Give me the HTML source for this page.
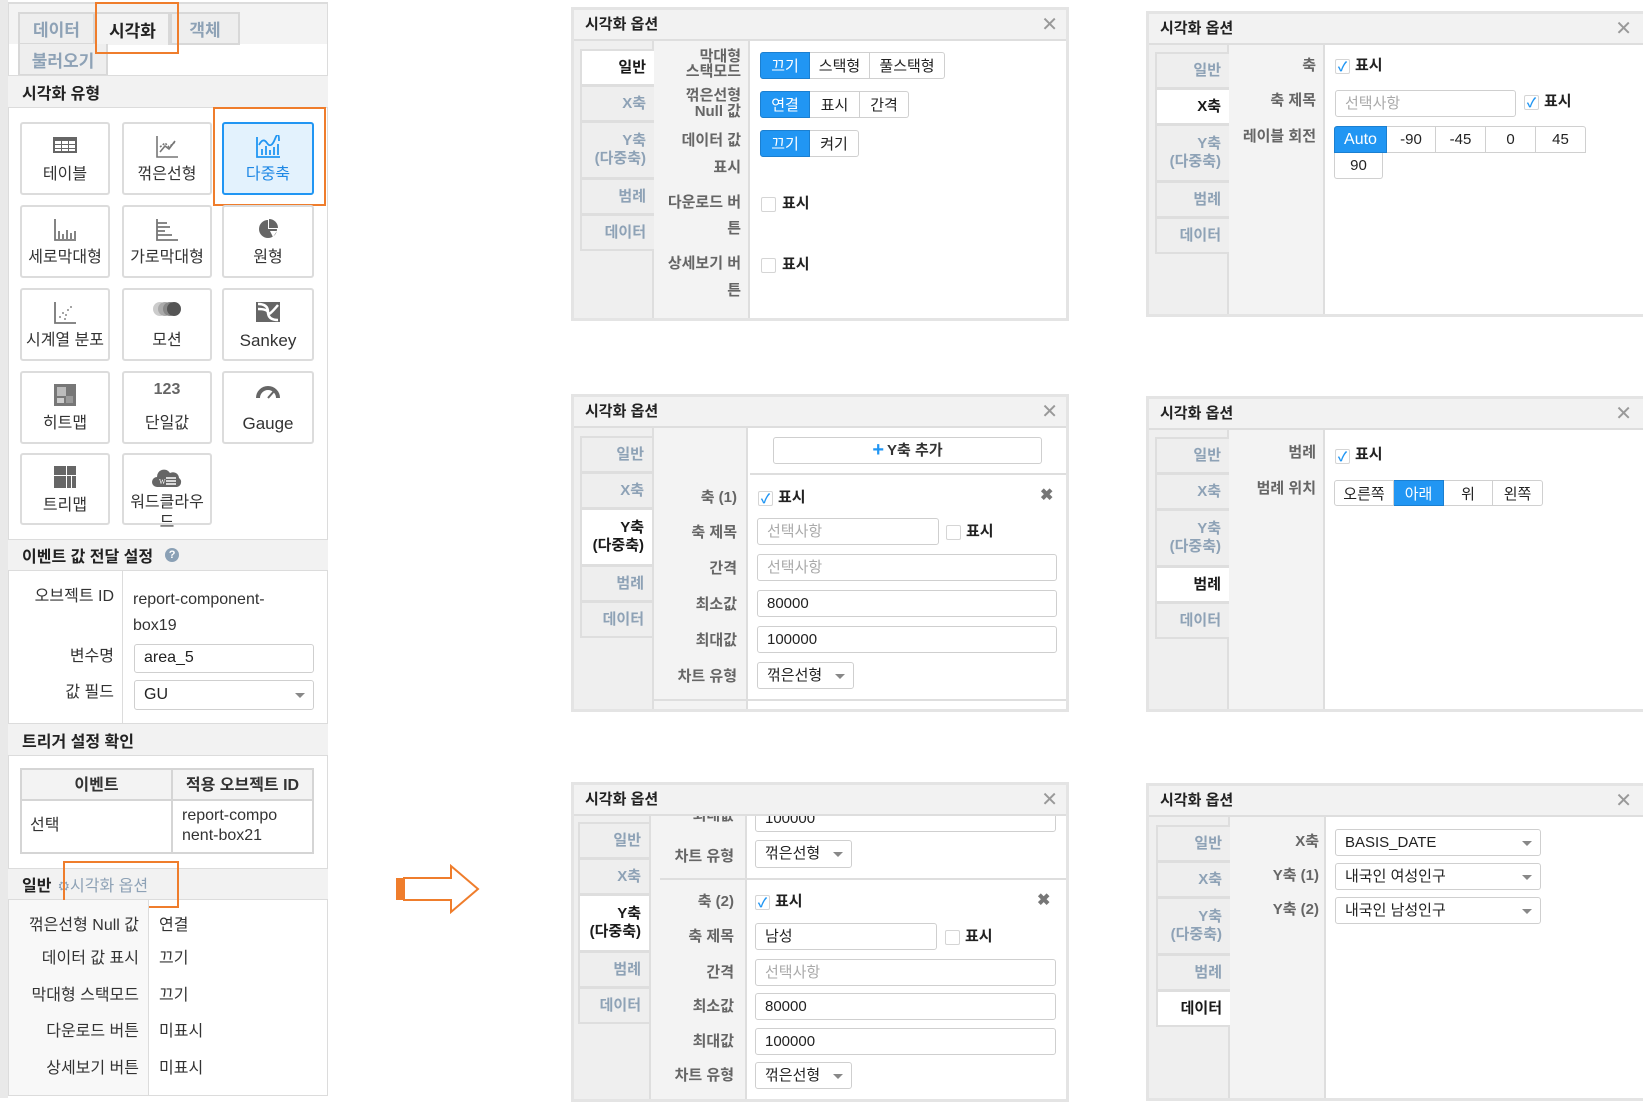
<!DOCTYPE html>
<html><head><meta charset="utf-8">
<style>
*{box-sizing:border-box;margin:0;padding:0}
body{width:1643px;height:1098px;background:#fff;position:relative;overflow:hidden;font-family:"Liberation Sans","Noto Sans CJK KR",sans-serif;color:#222}
.a{position:absolute}
.c{display:flex;align-items:center;justify-content:center}
.hd{background:#f2f2f2;border-top:1px solid #dcdcdc;border-bottom:1px solid #dcdcdc;font-weight:bold;font-size:16px;padding-left:14px;display:flex;align-items:center}
.card{position:absolute;border:2px solid #dcdcdc;border-radius:3px;background:#fff;font-size:16px;color:#333}
.card .ic{position:absolute;left:0;right:0;top:11px;height:26px;display:flex;justify-content:center}
.card .lb{position:absolute;left:0;right:0;top:41px;text-align:center;line-height:20px}
.org{position:absolute;border:2px solid #ef7d2c}
.dlg{position:absolute;border:3px solid #e4e4e4;background:#fff;overflow:hidden}
.dlg .tt{position:absolute;left:0;right:0;top:0;height:31px;background:#f2f2f2;border-bottom:2px solid #dedede;font-weight:bold;font-size:15px;padding-left:11px;line-height:29px}
.dlg .x{position:absolute;right:8px;top:3px;font-size:20px;color:#999;line-height:24px}
.dlg .tc{position:absolute;left:0;top:31px;width:80px;bottom:0;background:#efefef;border-right:2px solid #dedede}
.dlg .lc{position:absolute;left:80px;top:31px;width:96px;bottom:0;background:#f3f3f3;border-right:2px solid #dedede}
.tab{position:absolute;left:6px;width:74px;background:#eeeeee;border:2px solid #dedede;border-right:none;color:#8ea2b6;font-weight:bold;font-size:15px;text-align:right;padding-right:8px;display:flex;flex-direction:column;justify-content:center;line-height:18px}
.tab.on{background:#fff;color:#1a1a1a}
.lbl{position:absolute;right:0;width:170px;text-align:right;color:#666;font-weight:bold;font-size:15px;line-height:18px}
.seg{position:absolute;display:flex;height:27px}
.seg span{border:1px solid #d0d0d0;border-left:none;background:#fff;font-size:15px;display:flex;align-items:center;justify-content:center;color:#222}
.seg span:first-child{border-left:1px solid #d0d0d0;border-radius:3px 0 0 3px}
.seg span:last-child{border-radius:0 3px 3px 0}
.seg span.b{background:#2196f3;border-color:#1b7fd0;color:#fff}
.cb{position:absolute;width:15px;height:15px;border:1px solid #d5d5d5;border-radius:2px;background:#fff;color:#2196f3;font-size:13px;line-height:13px;text-align:center;font-weight:bold}
.t15{position:absolute;font-size:15px;font-weight:bold;color:#222;line-height:18px}
.inp{position:absolute;height:27px;border:1px solid #cfcfcf;border-radius:3px;background:#fff;font-size:15px;padding-left:9px;line-height:25px;color:#222}
.ph{color:#aaa}
.car{position:absolute;right:8px;top:11px;width:0;height:0;border-left:5px solid transparent;border-right:5px solid transparent;border-top:5px solid #888}
.row{position:absolute;font-size:16px;color:#333;line-height:20px}
</style></head><body>

<!-- LEFT PANEL -->
<div class="a" style="left:0;top:0;width:8px;height:1098px;background:#e9e9e9"></div>
<div class="a" style="left:8px;top:2px;width:320px;height:1094px;border:1px solid #dcdcdc;border-top:2px solid #dcdcdc;background:#fff"></div>
<div class="a" style="left:9px;top:4px;width:318px;height:40px;background:#f3f3f3"></div>
<div class="a c" style="left:18px;top:12px;width:77px;height:33px;background:#eeeeee;border:2px solid #d8d8d8;color:#8ea2b6;font-weight:bold;font-size:17px">데이터</div>
<div class="a c" style="left:95px;top:12px;width:75px;height:33px;background:#f3f3f3;border:2px solid #d8d8d8;border-bottom:none;font-weight:bold;font-size:17px">시각화</div>
<div class="a c" style="left:170px;top:12px;width:70px;height:33px;background:#eeeeee;border:2px solid #d8d8d8;color:#8ea2b6;font-weight:bold;font-size:17px">객체</div>
<div class="a c" style="left:18px;top:44px;width:90px;height:32px;background:#eeeeee;border:2px solid #d8d8d8;border-top:none;color:#8ea2b6;font-weight:bold;font-size:17px">불러오기</div>
<div class="org" style="left:95px;top:2px;width:84px;height:52px"></div>

<div class="a hd" style="left:8px;top:75px;width:320px;height:33px">시각화 유형</div>

<div class="card" style="left:20px;top:122px;width:90px;height:73px"><div class="ic"><svg width="26" height="20" viewBox="0 0 26 20"><rect x="1" y="2" width="24" height="16" fill="#666"/><g fill="#fff"><rect x="3" y="6" width="6" height="3"/><rect x="10" y="6" width="6" height="3"/><rect x="17" y="6" width="6" height="3"/><rect x="3" y="10" width="6" height="3"/><rect x="10" y="10" width="6" height="3"/><rect x="17" y="10" width="6" height="3"/><rect x="3" y="14" width="6" height="2"/><rect x="10" y="14" width="6" height="2"/><rect x="17" y="14" width="6" height="2"/></g></svg></div><div class="lb">테이블</div></div>
<div class="card" style="left:122px;top:122px;width:90px;height:73px"><div class="ic"><svg width="24" height="24" viewBox="0 0 24 24" fill="none" stroke="#777" stroke-width="1.6"><path d="M2 1v21h21"/><path d="M5 17l5-6 4 3 6-8" /><path d="M5 12l5-4 4 4 6-5" stroke-dasharray="2 1.5"/></svg></div><div class="lb">꺾은선형</div></div>
<div class="card" style="left:222px;top:122px;width:92px;height:73px;background:#e3f2fd;border-color:#2196f3;color:#1e88e5"><div class="ic"><svg width="26" height="24" viewBox="0 0 26 24" fill="none" stroke="#2196f3" stroke-width="1.8"><path d="M2 2v20h23"/><path d="M7 20v-6M11 20v-9M15 20v-5M19 20v-8M23 20v-11"/><path d="M4 10q4-8 8-2t8-4 4 2"/></svg></div><div class="lb">다중축</div></div>
<div class="org" style="left:213px;top:107px;width:113px;height:99px"></div>

<div class="card" style="left:20px;top:205px;width:90px;height:73px"><div class="ic"><svg width="24" height="24" viewBox="0 0 24 24" fill="none" stroke="#777" stroke-width="1.8"><path d="M2 1v21h21"/><path d="M6 21v-8M10 21v-5M14 21v-9M18 21v-6M22 21v-8"/></svg></div><div class="lb">세로막대형</div></div>
<div class="card" style="left:122px;top:205px;width:90px;height:73px"><div class="ic"><svg width="24" height="24" viewBox="0 0 24 24" fill="none" stroke="#777" stroke-width="1.8"><path d="M2 1v21h21"/><path d="M2 5h10M2 9h13M2 13h8M2 17h15"/></svg></div><div class="lb">가로막대형</div></div>
<div class="card" style="left:222px;top:205px;width:92px;height:73px"><div class="ic"><svg width="22" height="22" viewBox="0 0 22 22"><path d="M11 2a9 9 0 1 0 9 9h-9z" fill="#666"/><path d="M12 1a9 9 0 0 1 9 9h-9z" fill="#666"/><path d="M13 13h7l-4 6z" fill="#fff"/></svg></div><div class="lb">원형</div></div>

<div class="card" style="left:20px;top:288px;width:90px;height:73px"><div class="ic"><svg width="24" height="24" viewBox="0 0 24 24" fill="#888"><path d="M2 1v21h21" fill="none" stroke="#777" stroke-width="1.8"/><circle cx="7" cy="16" r="1"/><circle cx="10" cy="12" r="1"/><circle cx="13" cy="14" r="1"/><circle cx="15" cy="9" r="1"/><circle cx="18" cy="6" r="1"/><circle cx="12" cy="18" r="1"/></svg></div><div class="lb">시계열 분포</div></div>
<div class="card" style="left:122px;top:288px;width:90px;height:73px"><div class="ic"><svg width="30" height="16" viewBox="0 0 30 16"><circle cx="8" cy="8" r="7" fill="#ccc"/><circle cx="13" cy="8" r="7" fill="#aaa"/><circle cx="18" cy="8" r="7" fill="#888"/><circle cx="22" cy="8" r="7" fill="#555"/></svg></div><div class="lb">모션</div></div>
<div class="card" style="left:222px;top:288px;width:92px;height:73px"><div class="ic"><svg width="26" height="22" viewBox="0 0 26 22"><rect x="1" y="1" width="24" height="20" fill="#666"/><path d="M3 3q10 0 10 8t10 8M3 8q10 0 10 4t10-8" stroke="#fff" stroke-width="2.5" fill="none"/></svg></div><div class="lb" style="font-size:17px">Sankey</div></div>

<div class="card" style="left:20px;top:371px;width:90px;height:73px"><div class="ic"><svg width="22" height="22" viewBox="0 0 22 22"><rect x="0" y="0" width="22" height="22" fill="#777"/><rect x="3" y="3" width="9" height="9" fill="#bbb"/><rect x="12" y="12" width="7" height="7" fill="#999"/><rect x="3" y="14" width="7" height="5" fill="#ccc"/></svg></div><div class="lb">히트맵</div></div>
<div class="card" style="left:122px;top:371px;width:90px;height:73px"><div class="ic" style="font-weight:bold;color:#666;font-size:16px;top:8px">123</div><div class="lb">단일값</div></div>
<div class="card" style="left:222px;top:371px;width:92px;height:73px"><div class="ic"><svg width="24" height="16" viewBox="0 0 24 16"><path d="M2 14a10 10 0 0 1 20 0" stroke="#666" stroke-width="4" fill="none"/><path d="M12 14l7-8" stroke="#666" stroke-width="2"/></svg></div><div class="lb" style="font-size:17px">Gauge</div></div>

<div class="card" style="left:20px;top:453px;width:90px;height:72px"><div class="ic"><svg width="22" height="22" viewBox="0 0 22 22" fill="#666"><rect x="0" y="0" width="12" height="9"/><rect x="13" y="0" width="9" height="9"/><rect x="0" y="10" width="12" height="12"/><rect x="13" y="10" width="4" height="12"/><rect x="18" y="10" width="4" height="12"/></svg></div><div class="lb">트리맵</div></div>
<div class="card" style="left:122px;top:453px;width:90px;height:72px;overflow:visible"><div class="ic"><svg width="32" height="22" viewBox="0 0 32 22"><path d="M6 21a5 5 0 0 1 0-10a7 7 0 0 1 13-4a6 6 0 0 1 9 5a5 5 0 0 1-2 9z" fill="#666"/><text x="8" y="18" font-size="7" fill="#fff" font-family="Liberation Serif">W</text><path d="M15 12h10M15 15h10M15 18h10" stroke="#fff" stroke-width="1.5"/></svg></div><div class="lb" style="top:38px">워드클라우<br>드</div></div>

<div class="a hd" style="left:8px;top:539px;width:320px;height:32px">이벤트 값 전달 설정 <span style="display:inline-block;margin-left:12px;width:14px;height:14px;border-radius:50%;background:#8aa0b5;color:#fff;font-size:11px;text-align:center;line-height:14px">?</span></div>
<div class="a" style="left:122px;top:571px;width:1px;height:152px;background:#dcdcdc"></div>
<div class="row" style="left:8px;top:587px;width:106px;text-align:right">오브젝트 ID</div>
<div class="row" style="left:133px;top:587px;line-height:26px">report-component-<br>box19</div>
<div class="row" style="left:8px;top:647px;width:106px;text-align:right">변수명</div>
<div class="inp" style="left:134px;top:644px;width:180px;height:29px;font-size:16px">area_5</div>
<div class="row" style="left:8px;top:683px;width:106px;text-align:right">값 필드</div>
<div class="inp" style="left:134px;top:680px;width:180px;height:30px;font-size:16px;line-height:28px">GU<div class="car" style="top:12px"></div></div>

<div class="a hd" style="left:8px;top:723px;width:320px;height:33px">트리거 설정 확인</div>
<div class="a" style="left:20px;top:768px;width:294px;height:86px;border:2px solid #d5d5d5"></div>
<div class="a" style="left:22px;top:770px;width:290px;height:31px;background:#f3f3f3;border-bottom:2px solid #d5d5d5"></div>
<div class="a" style="left:171px;top:770px;width:2px;height:82px;background:#d5d5d5"></div>
<div class="row c" style="left:22px;top:770px;width:149px;height:31px;font-weight:bold">이벤트</div>
<div class="row c" style="left:173px;top:770px;width:139px;height:31px;font-weight:bold">적용 오브젝트 ID</div>
<div class="row" style="left:30px;top:816px">선택</div>
<div class="row" style="left:182px;top:806px;line-height:20px">report-compo<br>nent-box21</div>

<div class="a hd" style="left:8px;top:868px;width:320px;height:32px">일반 <span style="color:#8ea2b6;font-weight:normal;margin-left:6px"><span style="font-size:14px">⚙</span>시각화 옵션</span></div>
<div class="org" style="left:63px;top:861px;width:116px;height:47px"></div>
<div class="a" style="left:9px;top:900px;width:139px;height:195px;background:#f8f8f8"></div>
<div class="a" style="left:148px;top:900px;width:1px;height:195px;background:#dcdcdc"></div>
<div class="row" style="left:8px;top:916px;width:131px;text-align:right">꺾은선형 Null 값</div><div class="row" style="left:159px;top:916px">연결</div>
<div class="row" style="left:8px;top:949px;width:131px;text-align:right">데이터 값 표시</div><div class="row" style="left:159px;top:949px">끄기</div>
<div class="row" style="left:8px;top:986px;width:131px;text-align:right">막대형 스택모드</div><div class="row" style="left:159px;top:986px">끄기</div>
<div class="row" style="left:8px;top:1022px;width:131px;text-align:right">다운로드 버튼</div><div class="row" style="left:159px;top:1022px">미표시</div>
<div class="row" style="left:8px;top:1059px;width:131px;text-align:right">상세보기 버튼</div><div class="row" style="left:159px;top:1059px">미표시</div>

<!-- ARROW -->
<svg class="a" style="left:394px;top:864px" width="88" height="50" viewBox="0 0 88 50"><rect x="2" y="14" width="7" height="22" fill="#ef7d2c"/><path d="M10 14h47v-12l27 23-27 23v-12h-47z" fill="#fff" stroke="#ef7d2c" stroke-width="2"/></svg>

<!-- DIALOG 1 -->
<div class="dlg" style="left:571px;top:7px;width:498px;height:314px">
<div class="tt">시각화 옵션</div><div class="x">✕</div>
<div class="tc"></div><div class="lc"></div>
<div class="tab on" style="top:39px;height:37px">일반</div>
<div class="tab" style="top:75px;height:37px">X축</div>
<div class="tab" style="top:111px;height:58px">Y축<br>(다중축)</div>
<div class="tab" style="top:168px;height:37px">범례</div>
<div class="tab" style="top:204px;height:37px">데이터</div>
<div class="lbl" style="left:0;width:167px;top:39px;line-height:15px">막대형<br>스택모드</div>
<div class="lbl" style="left:0;width:167px;top:78px;line-height:16px">꺾은선형<br>Null 값</div>
<div class="lbl" style="left:0;width:167px;top:117px;line-height:27px">데이터 값<br>표시</div>
<div class="lbl" style="left:0;width:167px;top:180px;line-height:26px">다운로드 버<br>튼</div>
<div class="lbl" style="left:0;width:167px;top:240px;line-height:27px">상세보기 버<br>튼</div>
<div class="seg" style="left:186px;top:42px"><span class="b" style="width:50px">끄기</span><span style="width:60px">스택형</span><span style="width:75px">풀스택형</span></div>
<div class="seg" style="left:186px;top:81px"><span class="b" style="width:50px">연결</span><span style="width:50px">표시</span><span style="width:49px">간격</span></div>
<div class="seg" style="left:186px;top:120px"><span class="b" style="width:50px">끄기</span><span style="width:49px">켜기</span></div>
<div class="cb" style="left:187px;top:187px"></div><div class="t15" style="left:208px;top:185px">표시</div>
<div class="cb" style="left:187px;top:248px"></div><div class="t15" style="left:208px;top:246px">표시</div>
</div>

<!-- DIALOG 2 -->
<div class="dlg" style="left:1146px;top:11px;width:500px;height:306px">
<div class="tt">시각화 옵션</div><div class="x" style="right:11px">✕</div>
<div class="tc"></div><div class="lc"></div>
<div class="tab" style="top:38px;height:37px">일반</div>
<div class="tab on" style="top:74px;height:37px">X축</div>
<div class="tab" style="top:110px;height:58px">Y축<br>(다중축)</div>
<div class="tab" style="top:167px;height:37px">범례</div>
<div class="tab" style="top:203px;height:37px">데이터</div>
<div class="lbl" style="left:0;width:167px;top:43px">축</div>
<div class="lbl" style="left:0;width:167px;top:78px">축 제목</div>
<div class="lbl" style="left:0;width:167px;top:114px">레이블 회전</div>
<div class="cb" style="left:186px;top:45px">✓</div><div class="t15" style="left:206px;top:43px">표시</div>
<div class="inp ph" style="left:186px;top:76px;width:181px">선택사항</div>
<div class="cb" style="left:375px;top:81px">✓</div><div class="t15" style="left:395px;top:79px">표시</div>
<div class="seg" style="left:185px;top:112px"><span class="b" style="width:53px;border-radius:3px 0 0 0;font-size:16px">Auto</span><span style="width:49px">-90</span><span style="width:50px">-45</span><span style="width:50px">0</span><span style="width:50px;border-radius:0 3px 0 0">45</span></div>
<div class="seg" style="left:185px;top:139px;height:26px"><span style="width:49px;border-top:none;border-radius:0 0 3px 3px">90</span></div>
</div>

<!-- DIALOG 3 -->
<div class="dlg" style="left:571px;top:394px;width:498px;height:318px">
<div class="tt">시각화 옵션</div><div class="x">✕</div>
<div class="tc"></div><div class="lc" style="width:94px"></div>
<div class="tab" style="top:39px;height:37px;width:72px">일반</div>
<div class="tab" style="top:75px;height:37px;width:72px">X축</div>
<div class="tab on" style="top:111px;height:58px;width:72px">Y축<br>(다중축)</div>
<div class="tab" style="top:168px;height:37px;width:72px">범례</div>
<div class="tab" style="top:204px;height:37px;width:72px">데이터</div>
<div class="inp c" style="left:199px;top:40px;width:269px;height:27px;padding:0;font-weight:bold;color:#333"><span style="color:#2196f3;font-size:20px;margin-right:3px">+</span>Y축 추가</div>
<div class="a" style="left:176px;top:76px;width:320px;height:2px;background:#dedede"></div>
<div class="lbl" style="left:0;width:163px;top:92px">축 (1)</div>
<div class="lbl" style="left:0;width:163px;top:127px">축 제목</div>
<div class="lbl" style="left:0;width:163px;top:163px">간격</div>
<div class="lbl" style="left:0;width:163px;top:199px">최소값</div>
<div class="lbl" style="left:0;width:163px;top:235px">최대값</div>
<div class="lbl" style="left:0;width:163px;top:271px">차트 유형</div>
<div class="cb" style="left:184px;top:94px">✓</div><div class="t15" style="left:204px;top:92px">표시</div>
<div class="a" style="left:466px;top:88px;font-size:16px;color:#777;font-weight:bold">✖</div>
<div class="inp ph" style="left:183px;top:121px;width:182px">선택사항</div>
<div class="cb" style="left:372px;top:128px"></div><div class="t15" style="left:392px;top:126px">표시</div>
<div class="inp ph" style="left:183px;top:157px;width:300px">선택사항</div>
<div class="inp" style="left:183px;top:193px;width:300px">80000</div>
<div class="inp" style="left:183px;top:229px;width:300px">100000</div>
<div class="inp" style="left:183px;top:265px;width:97px">꺾은선형<div class="car"></div></div>
<div class="a" style="left:80px;top:302px;width:420px;height:2px;background:#dedede"></div>
</div>

<!-- DIALOG 4 -->
<div class="dlg" style="left:571px;top:782px;width:498px;height:320px">
<div class="tc" style="width:77px"></div><div class="lc" style="left:77px;width:96px"></div>
<div class="lbl" style="left:0;width:160px;top:22px">최대값</div>
<div class="inp" style="left:181px;top:20px;width:301px">100000</div>
<div class="tt">시각화 옵션</div><div class="x">✕</div>
<div class="tab" style="top:37px;height:37px;width:71px;left:4px">일반</div>
<div class="tab" style="top:73px;height:37px;width:71px;left:4px">X축</div>
<div class="tab on" style="top:109px;height:58px;width:71px;left:4px">Y축<br>(다중축)</div>
<div class="tab" style="top:166px;height:37px;width:71px;left:4px">범례</div>
<div class="tab" style="top:202px;height:37px;width:71px;left:4px">데이터</div>
<div class="lbl" style="left:0;width:160px;top:63px">차트 유형</div>
<div class="inp" style="left:181px;top:55px;width:97px;height:28px">꺾은선형<div class="car"></div></div>
<div class="a" style="left:86px;top:93px;width:410px;height:2px;background:#dedede"></div>
<div class="lbl" style="left:0;width:160px;top:108px">축 (2)</div>
<div class="lbl" style="left:0;width:160px;top:143px">축 제목</div>
<div class="lbl" style="left:0;width:160px;top:179px">간격</div>
<div class="lbl" style="left:0;width:160px;top:213px">최소값</div>
<div class="lbl" style="left:0;width:160px;top:248px">최대값</div>
<div class="lbl" style="left:0;width:160px;top:282px">차트 유형</div>
<div class="cb" style="left:181px;top:110px">✓</div><div class="t15" style="left:201px;top:108px">표시</div>
<div class="a" style="left:463px;top:105px;font-size:16px;color:#777;font-weight:bold">✖</div>
<div class="inp" style="left:181px;top:138px;width:182px">남성</div>
<div class="cb" style="left:371px;top:145px"></div><div class="t15" style="left:391px;top:143px">표시</div>
<div class="inp ph" style="left:181px;top:174px;width:301px">선택사항</div>
<div class="inp" style="left:181px;top:208px;width:301px">80000</div>
<div class="inp" style="left:181px;top:243px;width:301px">100000</div>
<div class="inp" style="left:181px;top:277px;width:97px">꺾은선형<div class="car"></div></div>
</div>

<!-- DIALOG 5 -->
<div class="dlg" style="left:1146px;top:396px;width:500px;height:316px">
<div class="tt">시각화 옵션</div><div class="x" style="right:11px">✕</div>
<div class="tc"></div><div class="lc"></div>
<div class="tab" style="top:38px;height:37px">일반</div>
<div class="tab" style="top:74px;height:37px">X축</div>
<div class="tab" style="top:110px;height:58px">Y축<br>(다중축)</div>
<div class="tab on" style="top:167px;height:37px">범례</div>
<div class="tab" style="top:203px;height:37px">데이터</div>
<div class="lbl" style="left:0;width:167px;top:45px">범례</div>
<div class="lbl" style="left:0;width:167px;top:81px">범례 위치</div>
<div class="cb" style="left:186px;top:50px">✓</div><div class="t15" style="left:206px;top:47px">표시</div>
<div class="seg" style="left:185px;top:81px;height:26px"><span style="width:60px">오른쪽</span><span class="b" style="width:50px">아래</span><span style="width:49px">위</span><span style="width:50px">왼쪽</span></div>
</div>

<!-- DIALOG 6 -->
<div class="dlg" style="left:1146px;top:783px;width:500px;height:318px">
<div class="tt">시각화 옵션</div><div class="x" style="right:11px">✕</div>
<div class="tc" style="width:81px"></div><div class="lc" style="left:81px"></div>
<div class="tab" style="top:39px;height:37px;left:7px">일반</div>
<div class="tab" style="top:75px;height:37px;left:7px">X축</div>
<div class="tab" style="top:111px;height:58px;left:7px">Y축<br>(다중축)</div>
<div class="tab" style="top:168px;height:37px;left:7px">범례</div>
<div class="tab on" style="top:204px;height:37px;left:7px">데이터</div>
<div class="lbl" style="left:0;width:170px;top:47px">X축</div>
<div class="lbl" style="left:0;width:170px;top:81px">Y축 (1)</div>
<div class="lbl" style="left:0;width:170px;top:115px">Y축 (2)</div>
<div class="inp" style="left:186px;top:43px;width:206px">BASIS_DATE<div class="car"></div></div>
<div class="inp" style="left:186px;top:77px;width:206px">내국인 여성인구<div class="car"></div></div>
<div class="inp" style="left:186px;top:111px;width:206px">내국인 남성인구<div class="car"></div></div>
</div>

</body></html>
